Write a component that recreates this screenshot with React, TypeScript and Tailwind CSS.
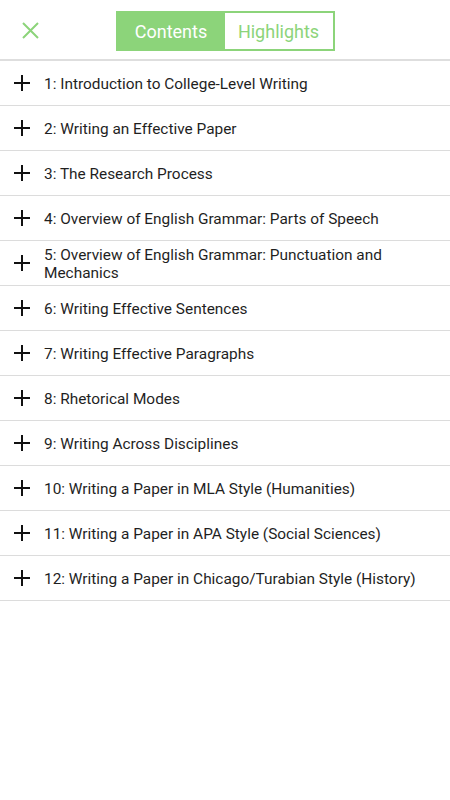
import React from "react";

const items = [
  "1: Introduction to College-Level Writing",
  "2: Writing an Effective Paper",
  "3: The Research Process",
  "4: Overview of English Grammar: Parts of Speech",
  "5: Overview of English Grammar: Punctuation and Mechanics",
  "6: Writing Effective Sentences",
  "7: Writing Effective Paragraphs",
  "8: Rhetorical Modes",
  "9: Writing Across Disciplines",
  "10: Writing a Paper in MLA Style (Humanities)",
  "11: Writing a Paper in APA Style (Social Sciences)",
  "12: Writing a Paper in Chicago/Turabian Style (History)",
];

export default function App() {
  return (
    <div className="w-[450px] h-[800px] bg-white" style={{ fontFamily: "Roboto, 'Noto Sans', sans-serif" }}>
      <div className="relative h-[61px] flex items-start justify-center pt-[11px] border-b-2 border-[#dedede]">
        <svg className="absolute left-[22px] top-[22px]" width="17" height="17" viewBox="0 0 17 17">
          <path d="M1 1 L16 16 M16 1 L1 16" stroke="#8cd47a" strokeWidth="2" fill="none" />
        </svg>
        <div className="flex h-[40px] border-2 border-[#8cd47a]">
          <div className="w-[107px] bg-[#8cd47a] text-white text-[18px] flex items-center justify-center">Contents</div>
          <div className="w-[108px] bg-white text-[#8cd47a] text-[18px] flex items-center justify-center">Highlights</div>
        </div>
      </div>
      {items.map((t) => (
        <div key={t} className="h-[45px] flex items-center border-b border-[#dcdcdc]">
          <svg className="ml-[13px] shrink-0" width="18" height="18" viewBox="0 0 18 18">
            <path d="M9 1 V17 M1 9 H17" stroke="#111" strokeWidth="2" fill="none" />
          </svg>
          <div className="ml-[13px] pr-4 pt-[1px] text-[15.4px] leading-[18px] text-[#1f1f1f]">{t}</div>
        </div>
      ))}
    </div>
  );
}
